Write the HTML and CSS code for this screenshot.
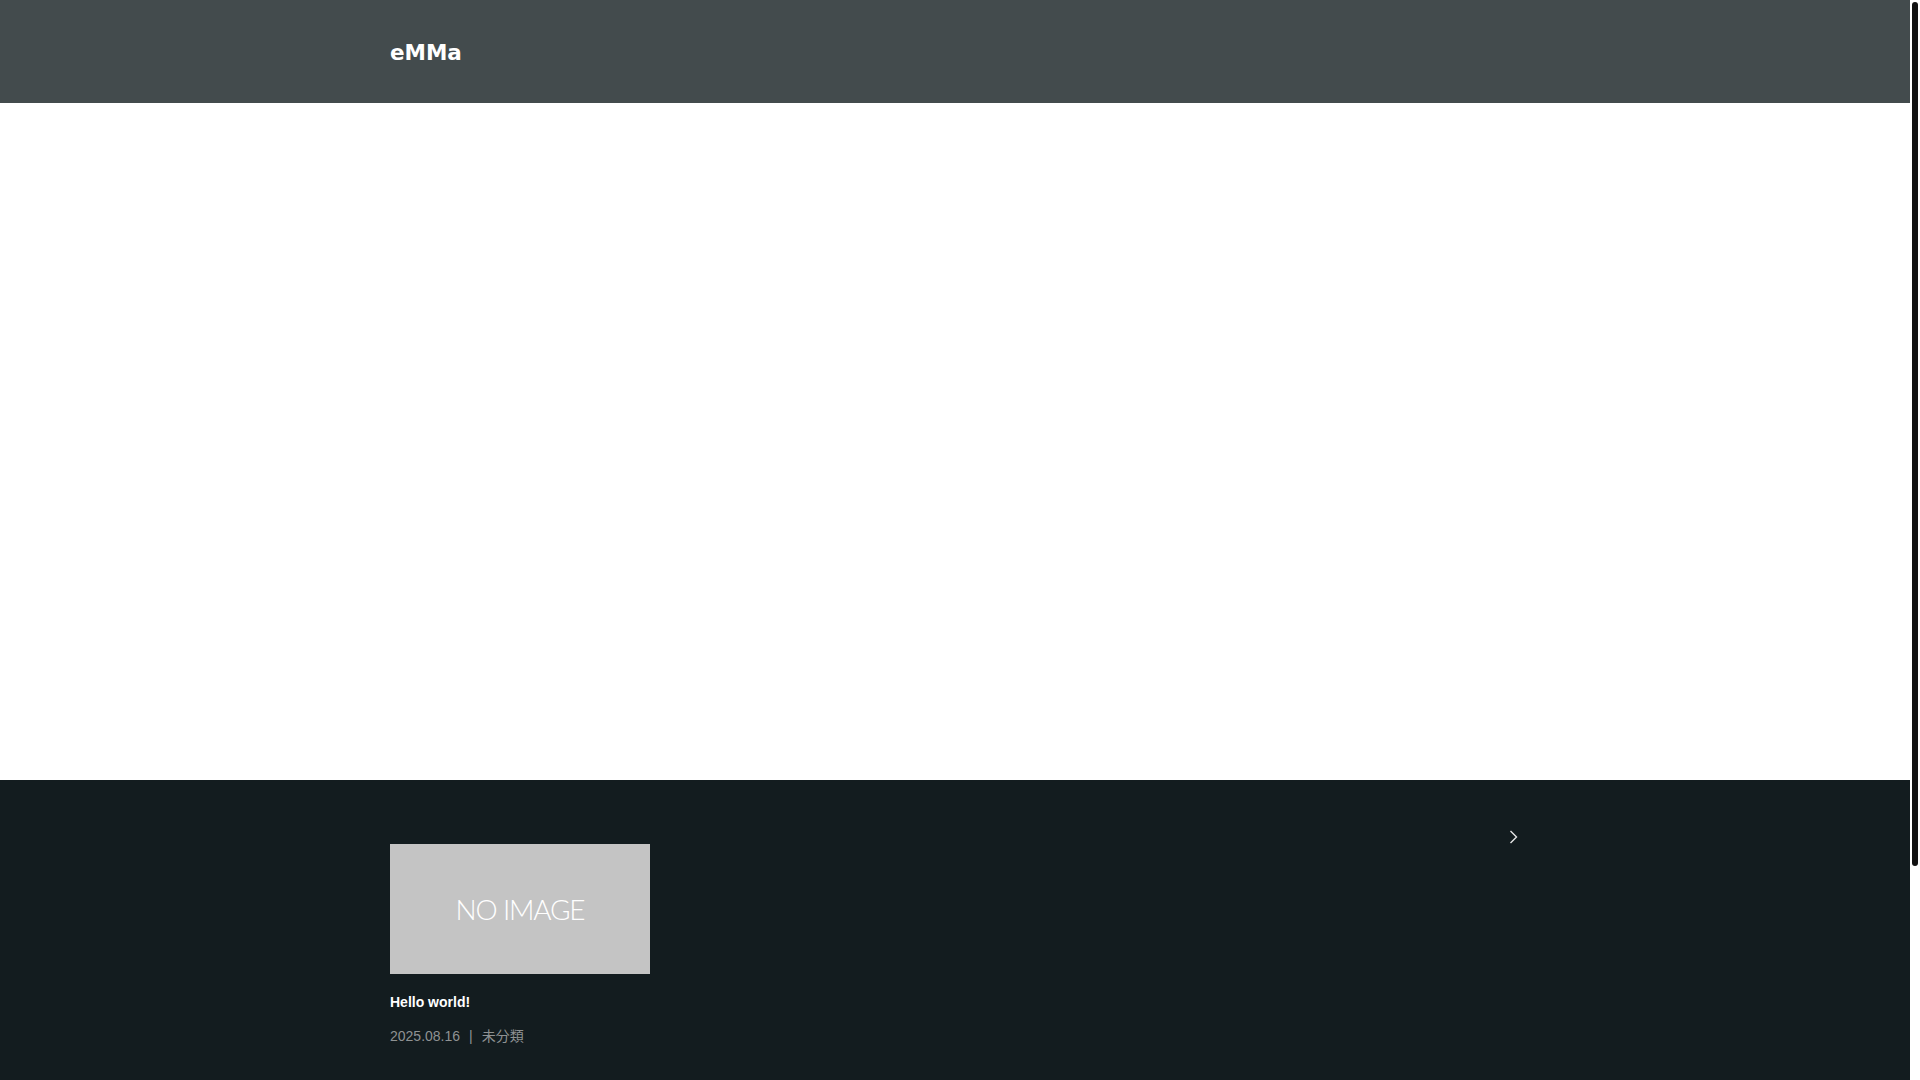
FILE: index.html
```html
<!DOCTYPE html>
<html lang="ja">
<head>
<meta charset="utf-8">
<title>eMMa</title>
<link rel="stylesheet" href="styles.css">
</head>
<body>
<div class="page">
  <header class="site-header">
    <div class="container header-inner">
      <a class="logo" href="#">eMMa</a>
    </div>
  </header>
  <main class="main-area"></main>
  <footer class="site-footer">
    <div class="container footer-inner">
      <div class="slider-nav">
        <svg class="chevron" width="9" height="14" viewBox="0 0 9 14" aria-hidden="true">
          <path d="M1.5 1 L7.5 7 L1.5 13" fill="none" stroke="#e6e6e6" stroke-width="1.4"/>
        </svg>
      </div>
      <article class="card">
        <div class="thumb"><span class="thumb-text">NO IMAGE</span></div>
        <h3 class="card-title">Hello world!</h3>
        <p class="card-meta"><span>2025.08.16</span><span class="sep">|</span><span class="cat">未分類</span></p>
      </article>
    </div>
  </footer>
</div>
<div class="scrollbar" aria-hidden="true"><div class="scroll-thumb"></div></div>
</body>
</html>
```

FILE: styles.css
```css
html {
  background: #ffffff;
}
body {
  margin: 0;
  font-family: "Liberation Sans", Arial, "Noto Sans CJK JP", sans-serif;
  color: #ffffff;
}
.page {
  margin-right: 10px;
}
.scrollbar {
  position: fixed;
  top: 0;
  right: 0;
  width: 10px;
  height: 100vh;
  background: #ffffff;
}
.scroll-thumb {
  margin: 2px 2px 0 2px;
  height: 864px;
  background: #111111;
  border-radius: 4px;
}
.container {
  width: 1130px;
  margin: 0 auto;
}
.site-header {
  background: #434b4d;
  height: 103px;
}
.header-inner {
  height: 100%;
  display: flex;
  align-items: center;
}
.logo {
  color: #ffffff;
  text-decoration: none;
  font-family: "DejaVu Sans", Verdana, sans-serif;
  font-weight: bold;
  font-size: 21.5px;
  line-height: 1;
  padding-top: 2px;
}
.main-area {
  height: 677px;
  background: #ffffff;
}
.site-footer {
  background: #131c1f;
  height: 567px;
}
.footer-inner {
  position: relative;
  padding-top: 64px;
}
.slider-nav {
  position: absolute;
  top: 50px;
  right: 2px;
}
.chevron {
  display: block;
}
.card {
  width: 260px;
}
.thumb {
  width: 260px;
  height: 130px;
  background: #c4c4c4;
  display: flex;
  align-items: center;
  justify-content: center;
}
.thumb-text {
  font-family: Lato, "Open Sans", sans-serif;
  font-weight: 300;
  font-size: 28px;
  color: #ffffff;
  line-height: 1;
  letter-spacing: -1.2px;
}
.card-title {
  margin: 18px 0 0;
  font-size: 14px;
  font-weight: bold;
  line-height: 21px;
  color: #ffffff;
}
.card-meta {
  margin: 13px 0 0;
  font-size: 14px;
  line-height: 21px;
  color: #8f9293;
}
.sep {
  margin: 0 9px;
}
.cat {
  font-family: "Liberation Sans", "Noto Sans CJK JP", sans-serif;
}
```
